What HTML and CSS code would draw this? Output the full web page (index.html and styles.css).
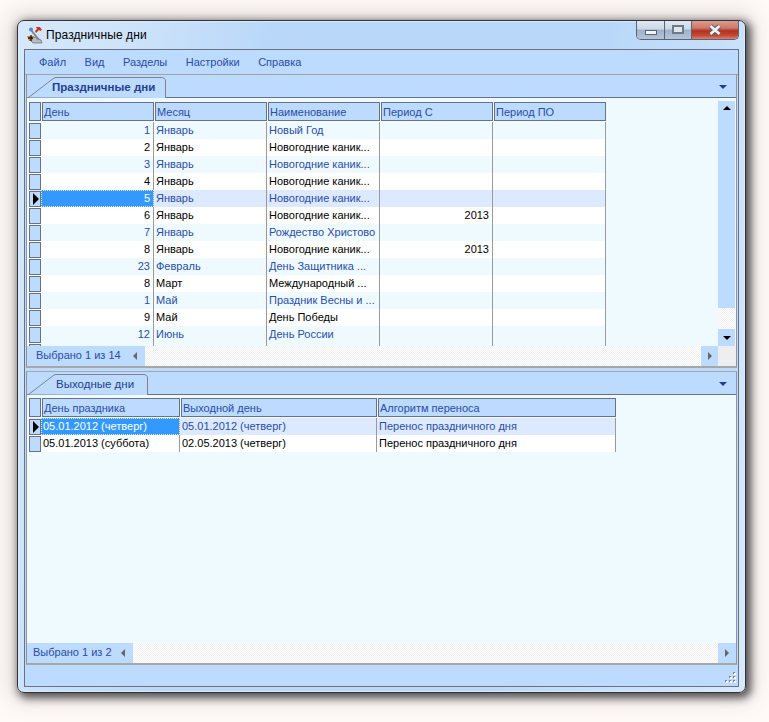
FILE: index.html
```html
<!DOCTYPE html>
<html lang="ru">
<head>
    <meta charset="UTF-8">
    <title>Праздничные дни</title>
    <link rel="stylesheet" href="styles.css">
</head>
<body>
    <div class="window">
        <!--заголовок окна-->
        <div class="titlebar">
            <svg class="appIcon" width="17" height="18" viewBox="0 0 17 18">
                <path d="M3 13l5-2 7 3 1 3H7z" fill="#b4bcc6" stroke="#5d6874" stroke-width=".7"/>
                <path d="M5 4l4 5 4 5" stroke="#7d8896" stroke-width="2" fill="none"/>
                <path d="M10 1h4l2 3-2 1-1-1-3 3-1-2 2-2z" fill="#d0301f"/>
                <circle cx="5" cy="3.500" r="2" fill="#5a86d0"/>
                <path d="M1 10h7l-2 5H3z" fill="#d08a20"/>
                <path d="M2 12h5M5 9v6" stroke="#1c1c1c" stroke-width="1.300"/>
            </svg>
            <span class="titleText">Праздничные дни</span>
            <div class="winBtns">
                <div class="winBtn minBtn"><span></span></div>
                <div class="winBtn maxBtn"><span></span></div>
                <div class="winBtn closeBtn">
                    <svg width="14" height="12" viewBox="0 0 14 12">
                        <path d="M2.500 2l9 8M11.500 2l-9 8" stroke="#59616c" stroke-width="4.400"/>
                        <path d="M2.500 2l9 8M11.500 2l-9 8" stroke="#f2f2f2" stroke-width="2.600"/>
                    </svg>
                </div>
            </div>
        </div>

        <div class="client">
            <div class="menu">
                <span>Файл</span>
                <span>Вид</span>
                <span>Разделы</span>
                <span>Настройки</span>
                <span>Справка</span>
            </div>

            <!--верхняя таблица-->
            <div class="section topSection">
                <div class="tabStrip">
                    <div class="tab tabWide">
                        <svg class="tabShape" width="140" height="21" viewBox="0 0 140 21">
                            <path d="M0 20.500h1.500L25 2.500Q27 .5 29 .5H134Q138.500 .5 138.500 4V21" fill="#bddaff" stroke="#7b8592"/>
                        </svg>
                        <span class="tabText tabBold">Праздничные дни</span>
                    </div>
                    <div class="tabArrow"></div>
                </div>
                <div class="panel">
                    <div class="panelMain">
                        <div class="grid gridTop">
                            <div class="row head">
                                <i class="sel"></i>
                                <div>День</div><div>Месяц</div><div>Наименование</div><div>Период С</div><div>Период ПО</div>
                            </div>
                            <div class="row alt">
                                <i class="sel"></i>
                                <div class="num">1</div><div>Январь</div><div>Новый Год</div><div></div><div></div>
                            </div>
                            <div class="row">
                                <i class="sel"></i>
                                <div class="num">2</div><div>Январь</div><div>Новогодние каник...</div><div></div><div></div>
                            </div>
                            <div class="row alt">
                                <i class="sel"></i>
                                <div class="num">3</div><div>Январь</div><div>Новогодние каник...</div><div></div><div></div>
                            </div>
                            <div class="row">
                                <i class="sel"></i>
                                <div class="num">4</div><div>Январь</div><div>Новогодние каник...</div><div></div><div></div>
                            </div>
                            <div class="row current">
                                <i class="sel mark"></i>
                                <div class="num focus">5</div><div>Январь</div><div>Новогодние каник...</div><div></div><div></div>
                            </div>
                            <div class="row">
                                <i class="sel"></i>
                                <div class="num">6</div><div>Январь</div><div>Новогодние каник...</div><div class="num">2013</div><div></div>
                            </div>
                            <div class="row alt">
                                <i class="sel"></i>
                                <div class="num">7</div><div>Январь</div><div>Рождество Христово</div><div></div><div></div>
                            </div>
                            <div class="row">
                                <i class="sel"></i>
                                <div class="num">8</div><div>Январь</div><div>Новогодние каник...</div><div class="num">2013</div><div></div>
                            </div>
                            <div class="row alt">
                                <i class="sel"></i>
                                <div class="num">23</div><div>Февраль</div><div>День Защитника ...</div><div></div><div></div>
                            </div>
                            <div class="row">
                                <i class="sel"></i>
                                <div class="num">8</div><div>Март</div><div>Международный ...</div><div></div><div></div>
                            </div>
                            <div class="row alt">
                                <i class="sel"></i>
                                <div class="num">1</div><div>Май</div><div>Праздник Весны и ...</div><div></div><div></div>
                            </div>
                            <div class="row">
                                <i class="sel"></i>
                                <div class="num">9</div><div>Май</div><div>День Победы</div><div></div><div></div>
                            </div>
                            <div class="row alt">
                                <i class="sel"></i>
                                <div class="num">12</div><div>Июнь</div><div>День России</div><div></div><div></div>
                            </div>
                            <div class="row alt">
                                <i class="sel"></i>
                                <div></div><div></div><div></div><div></div><div></div>
                            </div>
                        </div>
                        <div class="vScroll">
                            <div class="scrollBtn"><b class="arrow up"></b></div>
                            <div class="thumb"></div>
                            <div class="dither"></div>
                            <div class="scrollBtn"><b class="arrow down"></b></div>
                        </div>
                    </div>
                    <div class="hScroll">
                        <div class="count countTop">Выбрано 1 из 14<b class="arrow left"></b></div>
                        <div class="dither"></div>
                        <div class="scrollBtn"><b class="arrow right"></b></div>
                        <div class="corner"></div>
                    </div>
                </div>
            </div>

            <!--нижняя таблица-->
            <div class="section bottomSection">
                <div class="tabStrip">
                    <div class="tab tabNarrow">
                        <svg class="tabShape" width="122" height="21" viewBox="0 0 122 21">
                            <path d="M0 20.500h1.500L25 2.500Q27 .5 29 .5H116Q120.500 .5 120.500 4V21" fill="#bddaff" stroke="#7b8592"/>
                        </svg>
                        <span class="tabText">Выходные дни</span>
                    </div>
                    <div class="tabArrow"></div>
                </div>
                <div class="panel">
                    <div class="grid gridBottom">
                        <div class="row head">
                            <i class="sel"></i>
                            <div>День праздника</div><div>Выходной день</div><div>Алгоритм переноса</div>
                        </div>
                        <div class="row current">
                            <i class="sel mark"></i>
                            <div class="focus">05.01.2012 (четверг)</div><div>05.01.2012 (четверг)</div><div>Перенос праздничного дня</div>
                        </div>
                        <div class="row">
                            <i class="sel"></i>
                            <div>05.01.2013 (суббота)</div><div>02.05.2013 (четверг)</div><div>Перенос праздничного дня</div>
                        </div>
                    </div>
                    <div class="hScroll">
                        <div class="count countBottom">Выбрано 1 из 2<b class="arrow left"></b></div>
                        <div class="dither"></div>
                        <div class="scrollBtn wideBtn"><b class="arrow right"></b></div>
                    </div>
                </div>
            </div>

            <!--строка состояния-->
            <div class="statusBar">
                <svg class="grip" width="12" height="12" viewBox="0 0 12 12">
                    <path d="M9 1h2v2H9zM5 5h2v2H5zM9 5h2v2H9zM1 9h2v2H1zM5 9h2v2H5zM9 9h2v2H9z" fill="#7f8a96"/>
                    <path d="M10 2h2v2h-2zM6 6h2v2H6zM10 6h2v2h-2zM2 10h2v2H2zM6 10h2v2H6zM10 10h2v2h-2z" fill="#fff"/>
                </svg>
            </div>
        </div>
    </div>
</body>
</html>
```

FILE: styles.css
```css
*{
    padding: 0;
    margin: 0;
    box-sizing: border-box;
}
body{
    width: 769px;
    height: 722px;
    padding: 20px 0 0 17px;
    background-color: #fffaf8;
    font-family: "Liberation Sans", "Noto Sans", sans-serif;
    font-size: 11px;
    overflow: hidden;
}
.window{
    display: flex;
    flex-direction: column;
    width: 729px;
    height: 673px;
    padding: 0 6px 5px;
    border: 1px solid #2f3338;
    border-radius: 7px;
    background: linear-gradient(100deg, #d6e8fa 0, #cfe4fa 12%, #b9d8f9 30%, #b9d8f9 70%, #d8e9fb 100%);
    box-shadow: 3px 3px 9px 2px rgba(20, 20, 20, .7), 0 0 22px 8px rgba(90, 80, 75, .18), inset 0 0 0 1px #d8ebfd;
}

/* заголовок */
.titlebar{
    display: flex;
    align-items: center;
    flex: none;
    height: 28px;
    padding-left: 2px;
}
.appIcon{
    flex: none;
    margin-right: 3px;
}
.titleText{
    font-size: 12px;
    letter-spacing: .1px;
    color: #000;
}
.winBtns{
    display: flex;
    align-self: flex-start;
    height: 19px;
    margin-left: auto;
    border: 1px solid #5b6572;
    border-top: 0;
    border-radius: 0 0 5px 5px;
    overflow: hidden;
}
.winBtn{
    display: flex;
    align-items: center;
    justify-content: center;
    height: 100%;
    background: linear-gradient(#dfe8f2 0, #ccd9e7 42%, #9fb2c9 52%, #b4c5d9 100%);
    border-right: 1px solid #5b6572;
}
.minBtn{
    width: 28px;
}
.minBtn span{
    display: block;
    width: 12px;
    height: 5px;
    margin-top: 4px;
    border: 1px solid #5a6472;
    background-color: #f2f5f8;
}
.maxBtn{
    width: 27px;
}
.maxBtn span{
    display: block;
    width: 12px;
    height: 9px;
    margin-top: -1px;
    border: 2px solid #6f7a88;
    background-color: #dfe6ee;
}
.closeBtn{
    width: 46px;
    border-right: 0;
    background: linear-gradient(#dc9a8e 0, #cc7a6c 38%, #b53020 55%, #c04a36 80%, #d98472 100%);
}

/* клиентская часть */
.client{
    display: flex;
    flex-direction: column;
    flex: 1;
    border: 1px solid #69727e;
    background-color: #bddaff;
}
.menu{
    display: flex;
    flex: none;
    gap: 18.500px;
    align-items: center;
    height: 25px;
    padding-left: 14px;
    border-bottom: 1px solid #9ba3ad;
    color: #2a4da5;
}
.section{
    display: flex;
    flex-direction: column;
    flex: none;
    margin: 0 1px;
    border-left: 1px solid #8f959c;
    border-right: 1px solid #8f959c;
    border-bottom: 2px solid #a5a8aa;
}
.topSection{
    height: 293px;
}
.bottomSection{
    height: 294px;
    margin-top: 3px;
    border-top: 1px solid #a5a8aa;
}
.tabStrip{
    display: flex;
    flex: none;
    height: 23px;
    border-bottom: 1px solid #69727e;
}
.tab{
    position: relative;
    align-self: flex-end;
    height: 21px;
    margin-bottom: -1px;
    color: #23408f;
}
.tabWide{
    width: 140px;
}
.tabNarrow{
    width: 122px;
}
.tabShape{
    position: absolute;
    left: 0;
    top: 0;
}
.tabText{
    position: absolute;
    top: 4px;
    left: 25px;
    white-space: nowrap;
}
.tabNarrow .tabText{
    left: 29px;
    font-size: 11.500px;
}
.tabBold{
    font-size: 11.500px;
    font-weight: 700;
}
.tabArrow{
    width: 0;
    height: 0;
    margin: 10px 9px 0 auto;
    border-left: 4px solid transparent;
    border-right: 4px solid transparent;
    border-top: 4px solid #1d3f90;
}

/* таблицы */
.panel{
    display: flex;
    flex-direction: column;
    flex: 1;
    min-height: 0;
    padding-top: 3px;
    background-color: #eefaff;
}
.bottomSection .panel{
    padding-top: 2px;
}
.panelMain{
    display: flex;
    flex: 1;
    min-height: 0;
}
.grid{
    flex: 1;
    min-height: 0;
    padding: 1px 0 0 2px;
    overflow: hidden;
}
.row{
    display: grid;
    height: 17px;
    line-height: 16px;
    color: #000;
    background-color: #fff;
}
.gridTop .row{
    grid-template-columns: 12px repeat(5, 113px);
    width: 577px;
}
.gridBottom .row{
    grid-template-columns: 12px 139px 197px 239px;
    width: 587px;
}
.row > div{
    padding: 0 3px 0 2px;
    border-right: 1px solid #9a9a9a;
    white-space: nowrap;
    overflow: hidden;
}
.row .sel{
    display: block;
    height: 16px;
    margin-top: 1px;
    border: 1px solid #69727e;
    background-color: #bddaff;
}
.row.alt{
    color: #2a4da5;
    background-color: #eefaff;
}
.row.current{
    color: #2a4da5;
    background-color: #dce9ff;
}
.row.head{
    height: 20px;
    line-height: 18px;
    color: #2a4da5;
    background-color: #eefaff;
}
.row.head .sel{
    height: 19px;
    margin-top: 0;
}
.row.head > div{
    height: 19px;
    margin-left: 1px;
    padding: 0 1px;
    border: 1px solid #69727e;
    background-color: #bddaff;
}
.row .num{
    text-align: right;
}
.row .focus{
    margin-left: 0;
    color: #fff;
    background-color: #3399ff;
    outline: 1px dotted #dcecff;
    outline-offset: -1px;
}
.row .sel.mark{
    position: relative;
}
.sel.mark:after{
    content: "";
    position: absolute;
    left: 3px;
    top: 1px;
    border-left: 6px solid #000;
    border-top: 6px solid transparent;
    border-bottom: 6px solid transparent;
}

/* прокрутка */
.vScroll{
    display: flex;
    flex-direction: column;
    flex: none;
    width: 18px;
}
.scrollBtn{
    position: relative;
    flex: none;
    width: 17px;
    height: 17px;
    background-color: #bddaff;
}
.vScroll .thumb{
    flex: 1;
    width: 17px;
    background-color: #bddaff;
}
.vScroll .dither{
    flex: none;
    width: 17px;
    height: 21px;
}
.dither{
    background: repeating-conic-gradient(#fff 0 25%, #f0f0f0 0 50%) 0 0 / 2px 2px;
}
.hScroll{
    display: flex;
    flex: none;
    height: 20px;
    line-height: 19px;
}
.hScroll .dither{
    flex: 1;
}
.hScroll .scrollBtn{
    height: 20px;
}
.hScroll .wideBtn{
    width: 18px;
}
.corner{
    flex: none;
    width: 18px;
    background-color: #eeeeee;
}
.count{
    position: relative;
    flex: none;
    height: 100%;
    color: #2a4da5;
    background-color: #bddaff;
}
.countTop{
    width: 118px;
    padding-left: 9px;
}
.countBottom{
    width: 106px;
    padding-left: 6px;
}
.arrow{
    position: absolute;
    width: 0;
    height: 0;
}
.arrow.up{
    left: 5px;
    top: 5px;
    border-left: 4px solid transparent;
    border-right: 4px solid transparent;
    border-bottom: 4px solid #000;
}
.arrow.down{
    left: 5px;
    top: 7px;
    border-left: 4px solid transparent;
    border-right: 4px solid transparent;
    border-top: 4px solid #000;
}
.arrow.left{
    right: 8px;
    top: 6px;
    border-top: 4px solid transparent;
    border-bottom: 4px solid transparent;
    border-right: 4px solid #666;
}
.arrow.right{
    left: 7px;
    top: 6px;
    border-top: 4px solid transparent;
    border-bottom: 4px solid transparent;
    border-left: 4px solid #666;
}

/* строка состояния */
.statusBar{
    position: relative;
    flex: 1;
}
.grip{
    position: absolute;
    right: 2px;
    bottom: 3px;
}
```
